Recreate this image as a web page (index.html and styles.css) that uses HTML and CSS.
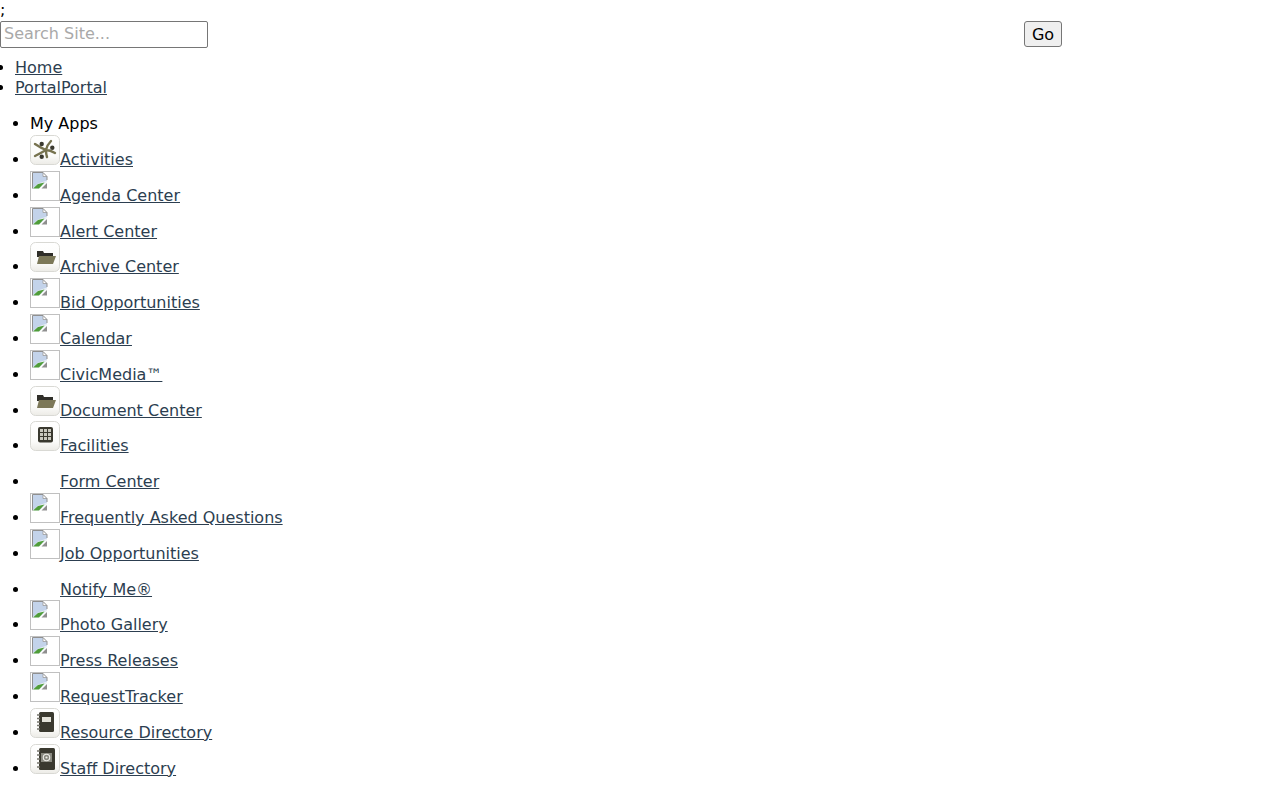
FILE: index.html
```html
<!DOCTYPE html>
<html lang="en">
<head>
    <meta charset="UTF-8">
    <title>Site Portal</title>
    <link rel="stylesheet" href="styles.css">
</head>
<body>
    <div class="semi">;</div>
    <form class="search">
        <div class="search-field"><input type="text" placeholder="Search Site..."></div>
        <div class="search-go"><button type="button">Go</button></div>
    </form>
    <ul class="main-nav">
        <li><a href="#">Home</a></li>
        <li><a href="#">PortalPortal</a></li>
    </ul>
    <ul class="apps">
        <li class="apps-title">My Apps</li>
        <li><svg class="tile" viewBox="0 0 30 30"><use href="#tile-bg"/><g fill="none" stroke="#77734f" stroke-width="2.400" stroke-linecap="round"><path d="M5 9Q11 13 16 15M21 6Q17 10 16 15M25 18Q20 15 16 15M5 21Q11 18 16 15M17 22Q16 19 16 15"/></g><circle cx="11.700" cy="9" r="2.200" fill="#3a392f"/><circle cx="22.300" cy="12.700" r="2.200" fill="#3a392f"/><circle cx="11.700" cy="21.700" r="2.200" fill="#3a392f"/></svg><a href="#">Activities</a></li>
        <li><svg class="tile broken" viewBox="0 0 28 28"><use href="#broken"/></svg><a href="#">Agenda Center</a></li>
        <li><svg class="tile broken" viewBox="0 0 28 28"><use href="#broken"/></svg><a href="#">Alert Center</a></li>
        <li><svg class="tile" viewBox="0 0 30 30"><use href="#tile-bg"/><use href="#folder"/></svg><a href="#">Archive Center</a></li>
        <li><svg class="tile broken" viewBox="0 0 28 28"><use href="#broken"/></svg><a href="#">Bid Opportunities</a></li>
        <li><svg class="tile broken" viewBox="0 0 28 28"><use href="#broken"/></svg><a href="#">Calendar</a></li>
        <li><svg class="tile broken" viewBox="0 0 28 28"><use href="#broken"/></svg><a href="#">CivicMedia™</a></li>
        <li><svg class="tile" viewBox="0 0 30 30"><use href="#tile-bg"/><use href="#folder"/></svg><a href="#">Document Center</a></li>
        <li><svg class="tile" viewBox="0 0 30 30"><use href="#tile-bg"/><rect x="8" y="6" width="15" height="15.500" rx="2" fill="#3a392f"/><path d="M10 9.500h11M10 13.500h11M10 17.500h11" stroke="#c9c8bd" stroke-width="3" stroke-dasharray="3 1" fill="none"/></svg><a href="#">Facilities</a></li>
        <li><span class="tile blank"></span><a href="#">Form Center</a></li>
        <li><svg class="tile broken" viewBox="0 0 28 28"><use href="#broken"/></svg><a href="#">Frequently Asked Questions</a></li>
        <li><svg class="tile broken" viewBox="0 0 28 28"><use href="#broken"/></svg><a href="#">Job Opportunities</a></li>
        <li><span class="tile blank"></span><a href="#">Notify Me®</a></li>
        <li><svg class="tile broken" viewBox="0 0 28 28"><use href="#broken"/></svg><a href="#">Photo Gallery</a></li>
        <li><svg class="tile broken" viewBox="0 0 28 28"><use href="#broken"/></svg><a href="#">Press Releases</a></li>
        <li><svg class="tile broken" viewBox="0 0 28 28"><use href="#broken"/></svg><a href="#">RequestTracker</a></li>
        <li><svg class="tile" viewBox="0 0 30 30"><use href="#tile-bg"/><rect x="9" y="4" width="15" height="20" rx="1.500" fill="#3a392f"/><rect x="12" y="9" width="9" height="5" fill="#e4e3da"/><path d="M7 7h3M7 10.500h3M7 14h3M7 17.500h3M7 21h3" stroke="#77766c" stroke-width="1.300"/></svg><a href="#">Resource Directory</a></li>
        <li><svg class="tile" viewBox="0 0 30 30"><use href="#tile-bg"/><rect x="9" y="4" width="16" height="22" rx="1.500" fill="#3a392f"/><rect x="11" y="9" width="11" height="9" fill="#8a8a80"/><circle cx="16.500" cy="13.500" r="3.200" fill="none" stroke="#eeeee8" stroke-width="1.100"/><circle cx="16.500" cy="13.500" r="1.100" fill="#eeeee8"/><path d="M7 7h3M7 11h3M7 15h3M7 19h3M7 23h3" stroke="#77766c" stroke-width="1.300"/></svg><a href="#">Staff Directory</a></li>
    </ul>
    <svg class="defs" width="0" height="0">
        <defs>
            <linearGradient id="tile-fill" x1="0" y1="0" x2="0" y2="1">
                <stop offset="0" stop-color="#ffffff"/>
                <stop offset="0.700" stop-color="#fbfbf9"/>
                <stop offset="1" stop-color="#ecebe6"/>
            </linearGradient>
            <g id="tile-bg">
                <rect x=".5" y=".5" width="29" height="29" rx="5" fill="url(#tile-fill)" stroke="#d9d9d4"/>
            </g>
            <g id="folder">
                <path d="M7 9h6l1 2h9v4H7z" fill="#2f2e28"/>
                <path d="M9 14h17l-3 8H7z" fill="#7c7858"/>
            </g>
            <g id="broken">
                <path d="M1.500 .500H12l4 4V9L8 12 1.500 16.500z" fill="#c3d3ea"/>
                <path d="M2 16.500 7 11.500 16 8.500V10L8.500 16.500z" fill="#e9eff7"/>
                <path d="M2 16.500 7 12 13.500 10.500 8 16.500z" fill="#4f9d3a"/>
                <path d="M12 .500v4h4" fill="#ffffff" stroke="#9a9a9a" stroke-width=".8"/>
                <path d="M1.500 16.500V.500H12l4 4V8" fill="none" stroke="#8f8f8f" stroke-width="1"/>
                <path d="M10.500 16.500 16 11v5.500z" fill="#8f8f8f"/>
            </g>
        </defs>
    </svg>
</body>
</html>
```

FILE: styles.css
```css
* {
    box-sizing: border-box;
}

body {
    margin: 0;
    font-family: "DejaVu Sans", sans-serif;
    font-size: 16px;
    line-height: 20px;
    color: #000;
    background: #fff;
}

a {
    color: #2c3e50;
}

.semi {
    height: 21px;
}

.search {
    display: flex;
    align-items: flex-start;
    margin: 0;
}

.search-field {
    width: 80%;
}

.search-go {
    width: 20%;
}

.search input {
    display: block;
    width: 208px;
    height: 27px;
    padding: 0 3px 2px;
    border: 1px solid #767676;
    border-radius: 2px;
    font: 16px "DejaVu Sans", sans-serif;
}

.search input::placeholder {
    color: #a9a9a9;
}

.search button {
    display: block;
    width: 38px;
    height: 26px;
    padding: 0;
    border: 1px solid #767676;
    border-radius: 3px;
    background: #efefef;
    color: #000;
    font: 16px "DejaVu Sans", sans-serif;
}

.main-nav {
    list-style: disc;
    margin: 10px 0 16px;
    padding-left: 15px;
}

.apps {
    list-style: disc;
    margin: 0;
    padding-left: 30px;
}

.apps li {
    height: 35.8px;
}

.apps li.apps-title {
    height: 21px;
}

.tile {
    display: inline-block;
    width: 30px;
    height: 30px;
}

.broken {
    border: 1px solid #c0c0c0;
}

.defs {
    position: absolute;
}
```
